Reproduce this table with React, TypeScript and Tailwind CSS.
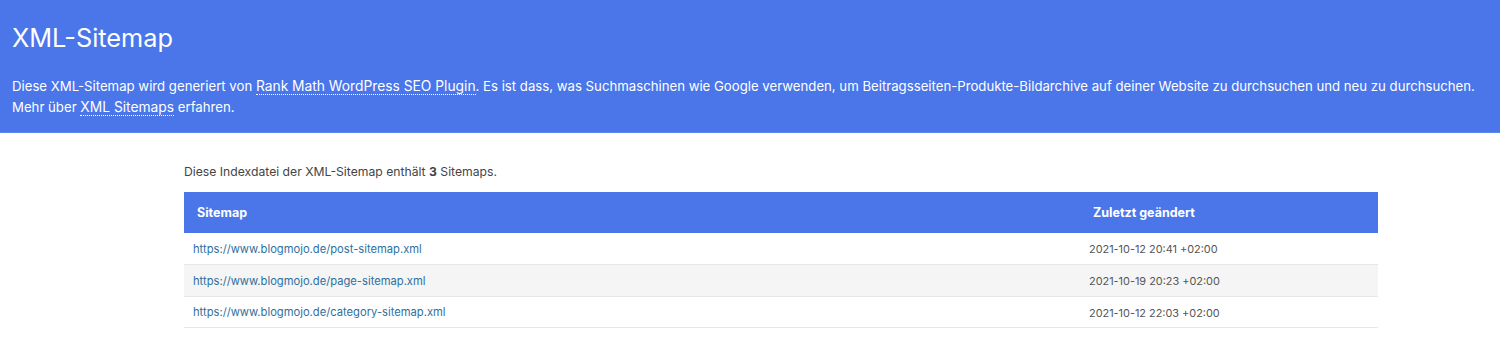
const ROWS = [
  { url: "https://www.blogmojo.de/post-sitemap.xml", date: "2021-10-12 20:41 +02:00" },
  { url: "https://www.blogmojo.de/page-sitemap.xml", date: "2021-10-19 20:23 +02:00" },
  { url: "https://www.blogmojo.de/category-sitemap.xml", date: "2021-10-12 22:03 +02:00" },
];

export default function App() {
  return (
    <div className="min-h-[363px] bg-white font-['Inter','Liberation_Sans',sans-serif] text-[#444]">
      <header className="h-[133px] border-b border-[#5a86f0] bg-[#4a76e9] px-3 pt-[22px] text-white">
        <h1 className="text-[25.3px] leading-[32px] font-normal">XML-Sitemap</h1>
        <p className="mt-[22px] text-[13.2px] leading-[21px] whitespace-nowrap">
          Diese XML-Sitemap wird generiert von{" "}
          <a className="border-b border-dotted border-white text-[13.8px]">Rank Math WordPress SEO Plugin</a>. Es ist
          dass, was Suchmaschinen wie Google verwenden, um Beitragsseiten-Produkte-Bildarchive auf deiner Website zu
          durchsuchen und neu zu durchsuchen.
          <br />
          Mehr über{" "}
          <a className="border-b border-dotted border-white text-[13.8px]">XML Sitemaps</a> erfahren.
        </p>
      </header>

      <main className="ml-[184px] w-[1194px] pt-[31px]">
        <p className="text-[12.2px] leading-[16px]">
          Diese Indexdatei der XML-Sitemap enthält <strong>3</strong> Sitemaps.
        </p>
        <table className="mt-[12px] w-full border-collapse">
          <thead>
            <tr className="h-[41px] bg-[#4a76e9] text-left text-[12.5px] text-white">
              <th className="pl-[13px] pt-[2px] font-bold">Sitemap</th>
              <th className="w-[298px] pl-[13px] pt-[2px] font-bold">Zuletzt geändert</th>
            </tr>
          </thead>
          <tbody>
            {ROWS.map((row, i) => (
              <tr
                key={row.url}
                className={`h-[31.5px] border-b border-[#e6e6e6] ${i % 2 === 1 ? "bg-[#f5f5f5]" : "bg-white"}`}
              >
                <td className="pl-[9px] pt-[2px] text-[11.2px]">
                  <a className="text-[#2f6f9f]">{row.url}</a>
                </td>
                <td className="pl-[9px] pt-[2px] text-[10.9px] text-[#555]">{row.date}</td>
              </tr>
            ))}
          </tbody>
        </table>
      </main>
    </div>
  );
}
